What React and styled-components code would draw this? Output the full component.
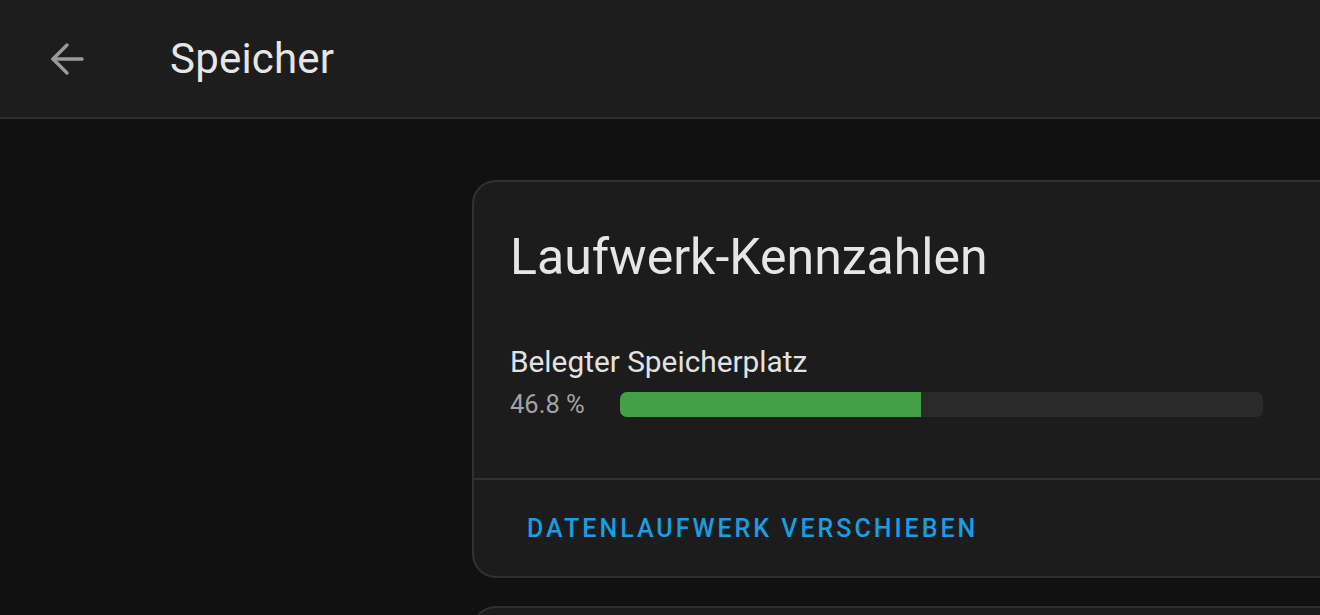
import styled, { createGlobalStyle } from "styled-components";

const GlobalStyle = createGlobalStyle`
  html, body {
    margin: 0;
    padding: 0;
    background: #111111;
    font-family: Roboto, "Noto Sans", sans-serif;
    overflow: hidden;
  }
`;

const Page = styled.div`
  width: 1320px;
  height: 615px;
  overflow: hidden;
  background: #111111;
`;

const Toolbar = styled.header`
  height: 117px;
  display: flex;
  align-items: center;
  background: #1d1d1d;
  border-bottom: 2px solid #2e2e2e;
`;

const BackButton = styled.button`
  width: 36px;
  height: 36px;
  margin-left: 49px;
  padding: 0;
  border: none;
  background: none;
  display: flex;
  align-items: center;
  justify-content: center;
  color: #9a9a9a;
`;

const ToolbarTitle = styled.h1`
  margin: 0 0 0 85px;
  font-size: 42px;
  font-weight: 400;
  color: #e6e6e6;
  letter-spacing: 0.2px;
`;

const Content = styled.main`
  display: flex;
  flex-direction: column;
  gap: 28px;
  padding: 61px 0 0 472px;
`;

const Card = styled.section`
  width: 960px;
  flex-shrink: 0;
  background: #1c1c1c;
  border: 2px solid #313131;
  border-radius: 24px;
  box-sizing: border-box;
`;

const CardBody = styled.div`
  padding: 45px 36px 61px;
`;

const CardTitle = styled.h2`
  margin: 0 0 57px;
  font-size: 50px;
  font-weight: 400;
  line-height: 60px;
  color: #e6e6e6;
`;

const MetricLabel = styled.div`
  font-size: 29.8px;
  color: #e2e2e2;
  line-height: 36px;
`;

const MetricRow = styled.div`
  display: flex;
  align-items: center;
  margin-top: 12px;
`;

const MetricValue = styled.span`
  width: 110px;
  font-size: 25.5px;
  line-height: 25px;
  color: #a3a3a3;
`;

const Track = styled.div`
  width: 643px;
  height: 25px;
  background: #2a2a2a;
  border-radius: 7px;
  overflow: hidden;
`;

const Fill = styled.div`
  height: 100%;
  background: #43a047;
`;

const CardActions = styled.div`
  border-top: 2px solid #313131;
  height: 96px;
  display: flex;
  align-items: center;
  padding-left: 53px;
`;

const ActionButton = styled.button`
  padding: 0;
  border: none;
  background: none;
  font-family: Roboto, "Noto Sans", sans-serif;
  font-size: 25px;
  font-weight: 500;
  letter-spacing: 3px;
  color: #1b9de2;
  text-transform: uppercase;
`;

function BackArrow() {
  return (
    <svg width="34" height="34" viewBox="0 0 34 34" fill="none" stroke="currentColor" strokeWidth="3.4" strokeLinecap="round" strokeLinejoin="round">
      <path d="M3 17H32" />
      <path d="M17 3L3 17L17 31" />
    </svg>
  );
}

export default function App() {
  const used = 46.8;
  return (
    <Page>
      <GlobalStyle />
      <Toolbar>
        <BackButton aria-label="Zurück">
          <BackArrow />
        </BackButton>
        <ToolbarTitle>Speicher</ToolbarTitle>
      </Toolbar>
      <Content>
        <Card>
          <CardBody>
            <CardTitle>Laufwerk-Kennzahlen</CardTitle>
            <MetricLabel>Belegter Speicherplatz</MetricLabel>
            <MetricRow>
              <MetricValue>{used} %</MetricValue>
              <Track>
                <Fill style={{ width: `${used}%` }} />
              </Track>
            </MetricRow>
          </CardBody>
          <CardActions>
            <ActionButton>Datenlaufwerk verschieben</ActionButton>
          </CardActions>
        </Card>
        <Card style={{ height: 200 }} />
      </Content>
    </Page>
  );
}
